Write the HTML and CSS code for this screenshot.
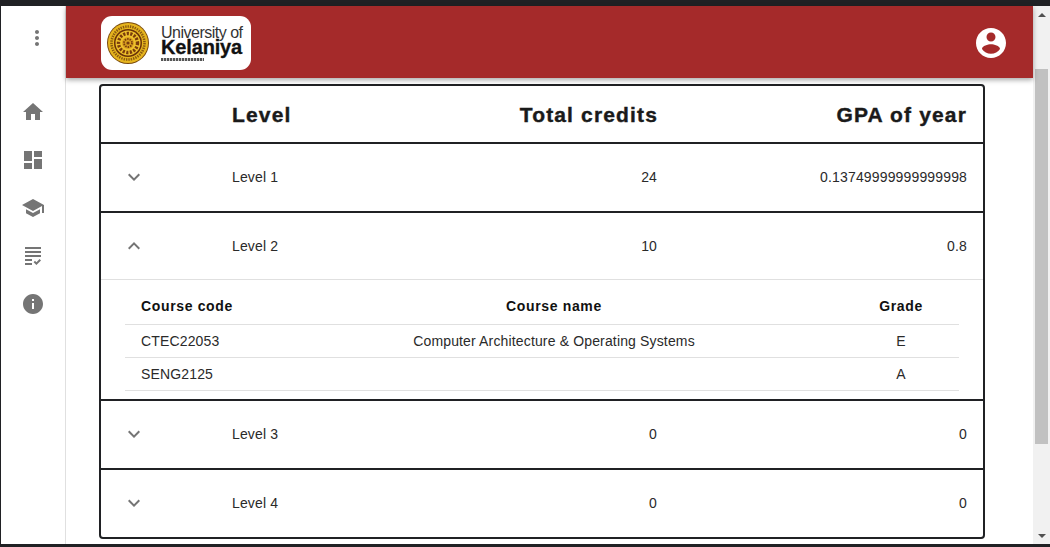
FILE: index.html
```html
<!DOCTYPE html>
<html lang="en">
<head>
  <meta charset="UTF-8">
  <title>Results</title>
  <link rel="stylesheet" href="styles.css">
</head>
<body>
<div class="app">
  <!--side menu-->
  <nav class="sidebar">
    <div class="menu-btn">
      <svg width="24" height="24" viewBox="0 0 24 24"><path d="M12 8c1.1 0 2-.9 2-2s-.9-2-2-2-2 .9-2 2 .9 2 2 2zm0 2c-1.1 0-2 .9-2 2s.9 2 2 2 2-.9 2-2-.9-2-2-2zm0 6c-1.1 0-2 .9-2 2s.9 2 2 2 2-.9 2-2-.9-2-2-2z"/></svg>
    </div>
    <ul class="nav-list">
      <li><svg width="24" height="24" viewBox="0 0 24 24"><path d="M10 20v-6h4v6h5v-8h3L12 3 2 12h3v8z"/></svg></li>
      <li><svg width="24" height="24" viewBox="0 0 24 24"><path d="M3 13h8V3H3v10zm0 8h8v-6H3v6zm10 0h8V11h-8v10zm0-18v6h8V3h-8z"/></svg></li>
      <li><svg width="24" height="24" viewBox="0 0 24 24"><path d="M5 13.18v4L12 21l7-3.82v-4L12 17l-7-3.82zM12 3L1 9l11 6 9-4.91V17h2V9L12 3z"/></svg></li>
      <li><svg width="24" height="24" viewBox="0 0 24 24"><path d="M4 7h16v2H4V7zm0 6h16v-2H4v2zm0 4h7v-2H4v2zm0 4h7v-2H4v2zm11.41-2.83L14 16.75l-1.41 1.41L15.41 21 20 16.42 18.58 15l-3.17 3.17zM4 3v2h16V3H4z"/></svg></li>
      <li><svg width="24" height="24" viewBox="0 0 24 24"><path d="M12 2C6.48 2 2 6.48 2 12s4.48 10 10 10 10-4.48 10-10S17.52 2 12 2zm1 15h-2v-6h2v6zm0-8h-2V7h2v2z"/></svg></li>
    </ul>
  </nav>

  <div class="main">
    <header class="topbar">
      <div class="logo">
        <svg class="seal" width="44" height="44" viewBox="0 0 44 44">
          <circle cx="22" cy="22" r="21" fill="#7a4a0c"/>
          <circle cx="22" cy="22" r="20" fill="#e6b51e"/>
          <circle cx="22" cy="22" r="16.5" fill="none" stroke="#8a5a10" stroke-width="2.6" stroke-dasharray="1.4 1"/>
          <circle cx="22" cy="22" r="14" fill="#6a3208"/>
          <circle cx="22" cy="22" r="12.5" fill="#eec12c"/>
          <circle cx="22" cy="22" r="9.5" fill="none" stroke="#7a3c0c" stroke-width="3.4" stroke-dasharray="2.2 1.4"/>
          <circle cx="22" cy="22" r="6" fill="#d8a020"/>
          <circle cx="22" cy="22" r="4" fill="none" stroke="#7a3c0c" stroke-width="1.8" stroke-dasharray="1.5 1"/>
          <circle cx="22" cy="22" r="1.6" fill="#7a3c0c"/>
        </svg>
        <div class="logo-text">
          <div class="logo-top">University of</div>
          <div class="logo-name">Kelaniya</div>
          <div class="logo-motto"></div>
        </div>
      </div>
      <svg class="account" width="36" height="36" viewBox="0 0 24 24"><path d="M12 2C6.48 2 2 6.48 2 12s4.48 10 10 10 10-4.48 10-10S17.52 2 12 2zm0 3c1.66 0 3 1.34 3 3s-1.34 3-3 3-3-1.34-3-3 1.34-3 3-3zm0 14.2c-2.5 0-4.71-1.28-6-3.22.03-1.99 4-3.08 6-3.08 1.99 0 5.97 1.09 6 3.08-1.29 1.94-3.5 3.22-6 3.22z"/></svg>
    </header>

    <div class="content">
      <div class="results">
        <div class="row row-head">
          <div></div>
          <div>Level</div>
          <div class="num">Total credits</div>
          <div class="num">GPA of year</div>
        </div>

        <div class="level">
          <div class="row">
            <svg class="chevron" width="24" height="24" viewBox="0 0 24 24"><path d="M16.59 8.59L12 13.17 7.41 8.59 6 10l6 6 6-6z"/></svg>
            <div>Level 1</div>
            <div class="num">24</div>
            <div class="num">0.13749999999999998</div>
          </div>
        </div>

        <div class="level">
          <div class="row row-open">
            <svg class="chevron" width="24" height="24" viewBox="0 0 24 24"><path d="M12 8l-6 6 1.41 1.41L12 10.83l4.59 4.58L18 14z"/></svg>
            <div>Level 2</div>
            <div class="num">10</div>
            <div class="num">0.8</div>
          </div>
          <div class="details">
            <div class="course course-head">
              <div class="code">Course code</div>
              <div class="mid">Course name</div>
              <div class="mid grade">Grade</div>
            </div>
            <div class="course">
              <div class="code">CTEC22053</div>
              <div class="mid">Computer Architecture &amp; Operating Systems</div>
              <div class="mid grade">E</div>
            </div>
            <div class="course">
              <div class="code">SENG2125</div>
              <div class="mid"></div>
              <div class="mid grade">A</div>
            </div>
          </div>
        </div>

        <div class="level">
          <div class="row">
            <svg class="chevron" width="24" height="24" viewBox="0 0 24 24"><path d="M16.59 8.59L12 13.17 7.41 8.59 6 10l6 6 6-6z"/></svg>
            <div>Level 3</div>
            <div class="num">0</div>
            <div class="num">0</div>
          </div>
        </div>

        <div class="level last">
          <div class="row">
            <svg class="chevron" width="24" height="24" viewBox="0 0 24 24"><path d="M16.59 8.59L12 13.17 7.41 8.59 6 10l6 6 6-6z"/></svg>
            <div>Level 4</div>
            <div class="num">0</div>
            <div class="num">0</div>
          </div>
        </div>
      </div>
    </div>
  </div>

  <!--browser scrollbar-->
  <div class="scrollbar">
    <span class="arrow-up"></span>
    <span class="thumb"></span>
    <span class="arrow-down"></span>
  </div>
</div>
</body>
</html>
```
FILE: styles.css
```css
* {
  padding: 0;
  margin: 0;
  list-style: none;
  box-sizing: border-box;
}

html, body {
  height: 100%;
  overflow: hidden;
}

body {
  background: #202124;
  padding: 6px 0 3px 1px;
  font-family: "Liberation Sans", Arial, sans-serif;
  font-size: 14px;
  letter-spacing: 0.15px;
  color: #2a2a2a;
}

.app {
  display: flex;
  height: 100%;
  background: #fff;
}

.sidebar {
  width: 65px;
  flex: none;
  border-right: 1px solid #e0e0e0;
  background: #fff;
}

.sidebar svg {
  fill: #757575;
  display: block;
}

.menu-btn {
  height: 64px;
  padding: 20px 0 0 24px;
}

.nav-list {
  padding-top: 18px;
}

.nav-list li {
  height: 48px;
  padding: 12px 0 0 20px;
}

.main {
  flex: 1;
  min-width: 0;
  display: flex;
  flex-direction: column;
}

.topbar {
  height: 72px;
  flex: none;
  background: #a52a2a;
  box-shadow: 0 2px 5px rgba(0, 0, 0, 0.35);
  display: flex;
  align-items: center;
  justify-content: space-between;
  padding: 2px 24px 0 35px;
  position: relative;
}

.logo {
  width: 150px;
  height: 54px;
  background: #fff;
  border-radius: 11px;
  display: flex;
  align-items: center;
  gap: 11px;
  padding-left: 5px;
}

.logo-text {
  color: #111;
}

.logo-top {
  font-size: 16px;
  line-height: 15px;
  letter-spacing: -0.5px;
  color: #333;
}

.logo-name {
  font-size: 20px;
  line-height: 15px;
  font-weight: bold;
  letter-spacing: -0.15px;
  -webkit-text-stroke: 0.3px #111;
}

.logo-motto {
  width: 43px;
  height: 3px;
  margin-top: 3px;
  background: repeating-linear-gradient(90deg, #555 0, #555 2px, #ccc 2px, #ccc 3px);
}

.account {
  fill: #fff;
  display: block;
}

.content {
  flex: 1;
  padding: 6px 48px 0 33px;
}

.results {
  height: 455px;
  border: 2px solid #202124;
  border-radius: 4px;
  overflow: hidden;
}

.row {
  display: grid;
  grid-template-columns: 131px 150px 275px 1fr;
  align-items: center;
  height: 67px;
  padding: 0 16px 1px 0;
}

.row-head {
  grid-template-columns: 131px 150px 276px 1fr;
  height: 58px;
  padding: 2px 16px 0 0;
  border-bottom: 2px solid #202124;
  font-size: 21px;
  font-weight: bold;
  letter-spacing: 1.15px;
  -webkit-text-stroke: 0.4px #1a1a1a;
  color: #1a1a1a;
}

.row-open {
  padding-bottom: 0;
  border-bottom: 1px solid #e0e0e0;
}

.num {
  text-align: right;
}

.chevron {
  fill: #757575;
  margin-left: 21px;
  display: block;
}

.level {
  border-bottom: 2px solid #202124;
}

.level.last {
  border-bottom: 0;
}

.details {
  padding: 8px 24px;
}

.course {
  display: grid;
  grid-template-columns: 142px 574px 118px;
  align-items: center;
  height: 33px;
  border-bottom: 1px solid #e0e0e0;
}

.course-head {
  height: 37px;
  font-weight: bold;
  color: #111;
  letter-spacing: 0.65px;
}

.code {
  padding-left: 16px;
}

.mid {
  text-align: center;
}

.grade {
  padding-left: 2px;
}

.scrollbar {
  width: 17px;
  flex: none;
  background: #f1f1f1;
  display: flex;
  flex-direction: column;
  align-items: center;
}

.arrow-up {
  border: 4px solid transparent;
  border-top: 0;
  border-bottom: 4px solid #505050;
  margin-top: 7px;
}

.thumb {
  width: 13px;
  height: 375px;
  background: #c1c1c1;
  margin-top: 52px;
}

.arrow-down {
  border: 4px solid transparent;
  border-bottom: 0;
  border-top: 4px solid #505050;
  margin-top: 90px;
}
```
